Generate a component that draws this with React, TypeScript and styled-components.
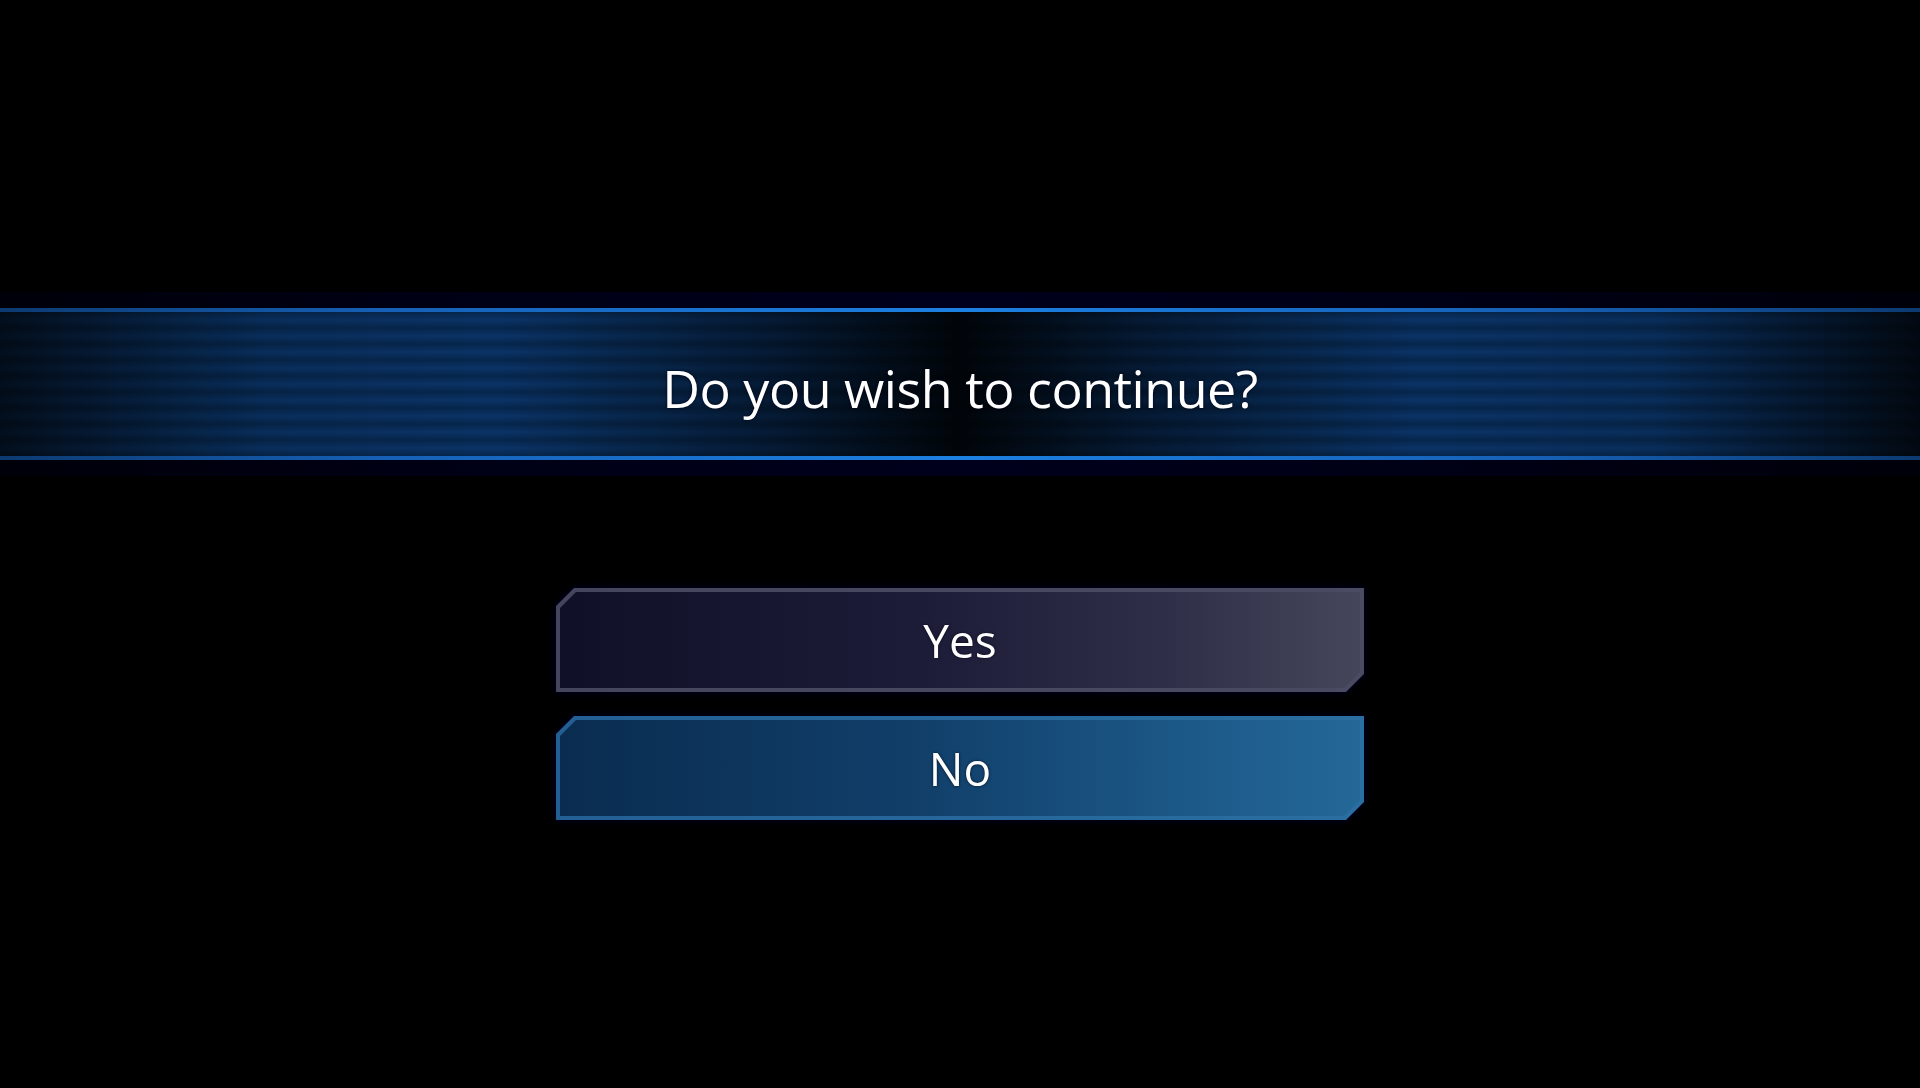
import styled, { createGlobalStyle } from 'styled-components';

const GlobalStyle = createGlobalStyle`
  html, body {
    margin: 0;
    padding: 0;
    background: #000;
  }
  body {
    font-family: 'Open Sans', 'Noto Sans', sans-serif;
  }
`;

const Page = styled.div`
  width: 1920px;
  height: 1088px;
  background: #000;
  padding-top: 292px;
  box-sizing: border-box;
  display: flex;
  flex-direction: column;
  align-items: center;
  overflow: hidden;
`;

const Halo = styled.div`
  width: 100%;
  padding: 16px 0;
  background: linear-gradient(
    to right,
    #00000a 0%,
    #000016 25%,
    #00001c 50%,
    #000016 75%,
    #00000a 100%
  );
`;

const Line = styled.div`
  height: 4px;
  background: linear-gradient(
    to right,
    #0c3a72 0%,
    #1660b6 20%,
    #1c80e2 50%,
    #1660b6 80%,
    #0c3a72 100%
  );
`;

const Band = styled.div`
  height: 144px;
  display: flex;
  align-items: center;
  justify-content: center;
  background:
    linear-gradient(
      to right,
      rgba(0, 0, 0, 0.7) 0%,
      rgba(0, 0, 0, 0.1) 14%,
      rgba(0, 0, 0, 0) 26%,
      rgba(0, 0, 0, 0.5) 41%,
      rgba(0, 0, 0, 0.9) 50%,
      rgba(0, 0, 0, 0.5) 59%,
      rgba(0, 0, 0, 0) 74%,
      rgba(0, 0, 0, 0.1) 86%,
      rgba(0, 0, 0, 0.82) 100%
    ),
    repeating-linear-gradient(
      to bottom,
      rgba(24, 90, 180, 0) 0px,
      rgba(24, 90, 180, 0.26) 8px,
      rgba(24, 90, 180, 0) 16px
    ),
    #06264c;
`;

const Title = styled.h1`
  margin: 0;
  padding-top: 6px;
  font-family: 'Open Sans', 'Noto Sans', sans-serif;
  font-weight: 400;
  font-size: 52px;
  letter-spacing: -0.5px;
  color: #fff;
  text-shadow: 0 0 3px rgba(0, 0, 20, 0.9);
`;

const Choices = styled.div`
  margin-top: 112px;
  display: flex;
  flex-direction: column;
  gap: 24px;
  filter: drop-shadow(0 0 3px #000030);
`;

const cut = `polygon(18px 0, 100% 0, 100% calc(100% - 18px), calc(100% - 18px) 100%, 0 100%, 0 18px)`;

const Choice = styled.button<{ $variant: 'neutral' | 'selected' }>`
  width: 808px;
  height: 104px;
  padding: 4px;
  border: none;
  cursor: pointer;
  clip-path: ${cut};
  background: ${(p) =>
    p.$variant === 'selected'
      ? 'linear-gradient(to right, #235f92, #2a6ea2)'
      : 'linear-gradient(to right, #45455e, #4a4a62)'};
`;

const Face = styled.span<{ $variant: 'neutral' | 'selected' }>`
  display: flex;
  align-items: center;
  justify-content: center;
  width: 100%;
  height: 100%;
  clip-path: polygon(16px 0, 100% 0, 100% calc(100% - 16px), calc(100% - 16px) 100%, 0 100%, 0 16px);
  background: ${(p) =>
    p.$variant === 'selected'
      ? 'linear-gradient(to right, #0a2c50 0%, #113f6a 45%, #1b5685 75%, #246898 100%)'
      : 'linear-gradient(to right, #101028 0%, #1c1c38 45%, #2e2e48 75%, #45455a 100%)'};
  font-family: 'Open Sans', 'Noto Sans', sans-serif;
  font-size: 46px;
  color: #fff;
  text-shadow: 0 0 3px rgba(0, 0, 20, 0.8);
`;

export default function App() {
  return (
    <Page>
      <GlobalStyle />
      <Halo>
        <Line />
        <Band>
          <Title>Do you wish to continue?</Title>
        </Band>
        <Line />
      </Halo>
      <Choices>
        <Choice $variant="neutral">
          <Face $variant="neutral">Yes</Face>
        </Choice>
        <Choice $variant="selected">
          <Face $variant="selected">No</Face>
        </Choice>
      </Choices>
    </Page>
  );
}
